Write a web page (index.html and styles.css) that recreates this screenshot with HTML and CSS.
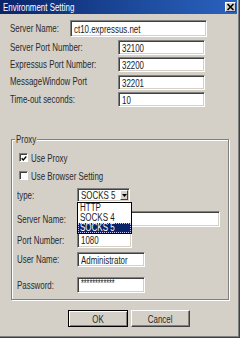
FILE: index.html
```html
<!DOCTYPE html>
<html>
<head>
<meta charset="utf-8">
<title>Environment Setting</title>
<link rel="stylesheet" href="styles.css">
</head>
<body>
<div class="win">
  <div class="titlebar">
    <span class="t title">Environment Setting</span>
    <span class="close"><svg width="9" height="8" viewBox="0 0 9 8"><path d="M1.5 1 L7.5 7 M7.5 1 L1.5 7" stroke="#000" stroke-width="1.6"/></svg></span>
  </div>

  <div class="row r1">
    <div class="lbl w60"><span class="t">Server Name:</span></div>
    <div class="field f-server"><span class="t">ct10.expressus.net</span></div>
  </div>
  <div class="row r2">
    <div class="lbl w108"><span class="t">Server Port Number:</span></div>
    <div class="field f-num"><span class="t">32100</span></div>
  </div>
  <div class="row r3">
    <div class="lbl w108"><span class="t">Expressus Port Number:</span></div>
    <div class="field f-num"><span class="t">32200</span></div>
  </div>
  <div class="row r4">
    <div class="lbl w108 top"><span class="t">MessageWindow Port</span></div>
    <div class="field f-num"><span class="t">32201</span></div>
  </div>
  <div class="row r5">
    <div class="lbl w108"><span class="t">Time-out seconds:</span></div>
    <div class="field f-num"><span class="t">10</span></div>
  </div>

  <div class="group">
    <div class="legend"><span class="t">Proxy</span></div>
    <div class="grow cbrow g1">
      <span class="cb"><svg width="7" height="7" viewBox="0 0 7 7"><path d="M0.8 3.2 L2.6 5.2 L6.2 1.2" fill="none" stroke="#000" stroke-width="1.5"/></svg></span>
      <span class="t">Use Proxy</span>
    </div>
    <div class="grow cbrow g2">
      <span class="cb"></span>
      <span class="t">Use Browser Setting</span>
    </div>
    <div class="grow frow g3">
      <div class="lbl w60"><span class="t">type:</span></div>
      <div class="select">
        <div class="field f-select"><span class="t">SOCKS 5</span></div>
        <span class="arrow"><svg width="5" height="3" viewBox="0 0 5 3"><path d="M0 0 H5 L2.5 3 Z" fill="#000"/></svg></span>
        <ul class="list">
          <li><span class="t">HTTP</span></li>
          <li><span class="t">SOCKS 4</span></li>
          <li class="sel"><span class="t">SOCKS 5</span></li>
        </ul>
      </div>
    </div>
    <div class="grow frow g4">
      <div class="lbl w60"><span class="t">Server Name:</span></div>
      <div class="field f-pserver"></div>
    </div>
    <div class="grow frow g5">
      <div class="lbl w60"><span class="t">Port Number:</span></div>
      <div class="field f-port"><span class="t">1080</span></div>
    </div>
    <div class="grow frow g6">
      <div class="lbl w60"><span class="t">User Name:</span></div>
      <div class="field f-user"><span class="t">Administrator</span></div>
    </div>
    <div class="grow frow g7">
      <div class="lbl w60"><span class="t">Password:</span></div>
      <div class="field f-user f-pass"><span class="t">************</span></div>
    </div>
  </div>

  <div class="buttons">
    <button class="btn btn-ok"><span class="t">OK</span></button>
    <button class="btn btn-cancel"><span class="t">Cancel</span></button>
  </div>
</div>
</body>
</html>
```

FILE: styles.css
```css
* { box-sizing: border-box; }
html, body { margin: 0; padding: 0; }
body {
  width: 240px;
  height: 338px;
  overflow: hidden;
  background: #d4d0c8;
  font-family: "Liberation Sans", Arial, sans-serif;
  font-size: 11px;
  color: #2a2a2a;
}
.win {
  width: 240px;
  height: 338px;
  background: #d4d0c8;
  border-right: 1px solid #404040;
  border-bottom: 1px solid #404040;
  box-shadow: inset -1px -1px 0 #808080;
  display: flex;
  flex-direction: column;
}
.t {
  display: inline-block;
  white-space: nowrap;
  transform: scaleX(0.72);
  transform-origin: 0 50%;
}

/* title bar */
.titlebar {
  height: 14px;
  margin-right: 2px;
  background: linear-gradient(90deg, #0a246a 0%, #1e4c9e 60%, #2a62bf 100%);
  color: #fff;
  display: flex;
  align-items: center;
  padding-left: 3px;
}
.title { flex: 1; line-height: 14px; }
.close {
  width: 11px;
  height: 10px;
  margin-right: 1px;
  background: #d4d0c8;
  border: 1px solid;
  border-color: #fff #404040 #404040 #fff;
  display: flex;
  align-items: center;
  justify-content: center;
}

/* rows */
.row { display: flex; align-items: center; padding-left: 10px; height: 15px; flex: none; }
.r1 { margin-top: 6px; height: 17px; }
.r2 { margin-top: 3px; }
.r3 { margin-top: 2px; }
.r4 { margin-top: 3px; }
.r5 { margin-top: 2px; }

.lbl { flex: none; line-height: 11px; }
.w60 { width: 60px; }
.w108 { width: 108px; }
.top { align-self: flex-start; padding-top: 1px; }

.field {
  height: 100%;
  flex: none;
  background: #fff;
  border: 1px solid;
  border-color: #808080 #fff #fff #808080;
  box-shadow: inset 1px 1px 0 #404040, inset -1px -1px 0 #d4d0c8;
  display: flex;
  align-items: center;
  padding-left: 3px;
  color: #1a1a1a;
  overflow: hidden;
}
.f-server { width: 137px; }
.f-num { width: 87px; }
.f-pserver { width: 143px; }
.f-port { width: 55px; }
.f-user { width: 68px; }
.f-pass { align-items: flex-start; padding-top: 1px; line-height: 10px; font-size: 10px; }

/* group box */
.group {
  margin: 32px 0 0 11px;
  width: 218px;
  height: 161px;
  flex: none;
  border: 1px solid #808080;
  box-shadow: inset 1px 1px 0 #fff, 1px 1px 0 #fff;
  display: flex;
  flex-direction: column;
}
.legend {
  align-self: flex-start;
  width: 22px;
  height: 12px;
  line-height: 12px;
  margin: -7px 0 0 3px;
  padding-left: 1px;
  background: #d4d0c8;
}
.grow { display: flex; align-items: center; flex: none; }
.cbrow { padding-left: 7px; height: 13px; gap: 3px; }
.frow { padding-left: 5px; }
.g1 { margin-top: 6px; }
.g2 { margin-top: 5px; }
.g3 { margin-top: 6px; height: 14px; }
.g4 { margin-top: 9px; height: 16px; }
.g5 { margin-top: 5px; height: 16px; }
.g6 { margin-top: 4px; height: 15px; }
.g7 { margin-top: 10px; height: 16px; }

.cb {
  width: 9px;
  height: 9px;
  flex: none;
  background: #fff;
  border: 1px solid;
  border-color: #808080 #fff #fff #808080;
  box-shadow: inset 1px 1px 0 #404040;
  display: flex;
  align-items: center;
  justify-content: center;
  padding: 1px 0 0 1px;
}

/* combo */
.select { position: relative; width: 53px; height: 100%; flex: none; }
.f-select { width: 53px; }
.arrow {
  position: absolute;
  right: 2px;
  top: 2px;
  width: 8px;
  height: 10px;
  background: #d4d0c8;
  border: 1px solid;
  border-color: #fff #404040 #404040 #fff;
  display: flex;
  align-items: center;
  justify-content: center;
}
.list {
  position: absolute;
  left: 0;
  top: 100%;
  z-index: 2;
  width: 55px;
  margin: 0;
  padding: 0;
  list-style: none;
  background: #fff;
  border: 1px solid #000;
  font-size: 10px;
}
.list li { height: 10px; line-height: 10px; padding-left: 2px; color: #1a1a1a; display: flex; align-items: center; }
.list li .t { transform: scaleX(0.8); }
.list li.sel {
  background: #0a246a;
  color: #fff;
  outline: 1px dotted #c8c8ff;
  outline-offset: -1px;
}

/* buttons */
.buttons { display: flex; gap: 3px; padding-left: 68px; margin-top: 10px; height: 17px; flex: none; }
.btn {
  height: 17px;
  padding: 0;
  font: inherit;
  color: #2a2a2a;
  background: #d4d0c8;
  border: 1px solid;
  display: flex;
  align-items: center;
  justify-content: center;
}
.btn .t { transform-origin: 50% 50%; }
.btn-ok {
  width: 60px;
  border-color: #000;
  box-shadow: inset 1px 1px 0 #fff, inset -1px -1px 0 #808080;
}
.btn-cancel {
  width: 59px;
  border-color: #fff #404040 #404040 #fff;
  box-shadow: inset -1px -1px 0 #808080;
}
```
